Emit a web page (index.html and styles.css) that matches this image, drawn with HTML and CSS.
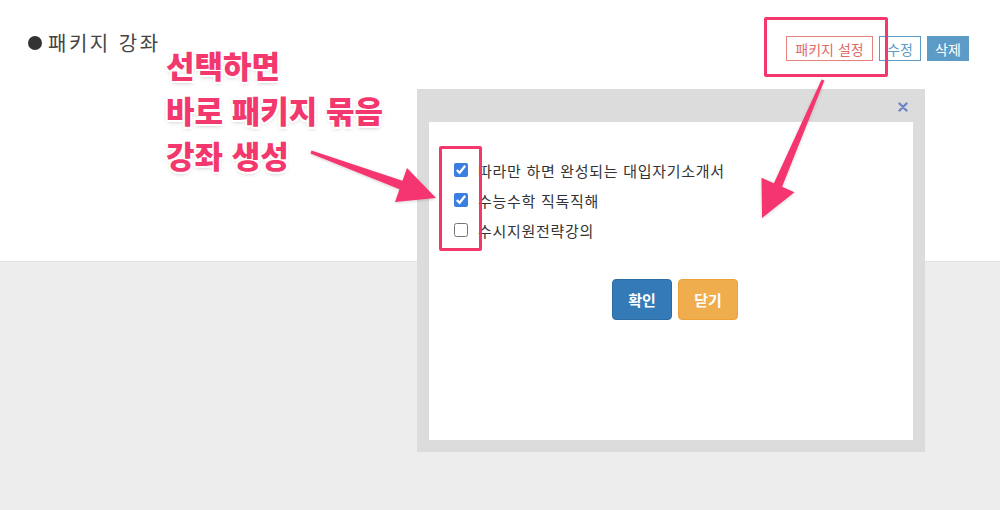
FILE: index.html
```html
<!DOCTYPE html>
<html lang="ko">
<head>
  <meta charset="UTF-8">
  <title>패키지 강좌</title>
  <link rel="stylesheet" href="styles.css">
</head>
<body>

  <div class="page">
    <header class="head">
      <h2 class="title"><span class="dot"></span>패키지 강좌</h2>
      <div class="actions">
        <button class="btn btn-line-red">패키지 설정</button>
        <button class="btn btn-line-blue">수정</button>
        <button class="btn btn-fill-blue">삭제</button>
      </div>
    </header>
    <main class="rest"></main>
  </div>

  <!-- package setting popup -->
  <div class="modal">
    <button class="close" aria-label="닫기">
      <svg width="10" height="10" viewBox="0 0 10 10">
        <path d="M1.5 1.5 L8.5 8.5 M8.5 1.5 L1.5 8.5" stroke="#6c86c4" stroke-width="2.4" stroke-linecap="round"/>
      </svg>
    </button>
    <div class="modal-body">
      <ul class="checks">
        <li><label><input type="checkbox" checked>따라만 하면 완성되는 대입자기소개서</label></li>
        <li><label><input type="checkbox" checked>수능수학 직독직해</label></li>
        <li><label><input type="checkbox">수시지원전략강의</label></li>
      </ul>
      <div class="modal-btns">
        <button class="mbtn mbtn-ok">확인</button>
        <button class="mbtn mbtn-close">닫기</button>
      </div>
    </div>
  </div>

  <!-- annotations -->
  <div class="note">선택하면<br>바로 패키지 묶음<br>강좌 생성</div>
  <div class="mark mark-top"></div>
  <div class="mark mark-checks"></div>

  <svg class="arrows" width="1000" height="510" viewBox="0 0 1000 510">
    <defs>
      <filter id="sh" x="-20%" y="-20%" width="140%" height="140%">
        <feDropShadow dx="0" dy="1" stdDeviation="1.5" flood-color="#000" flood-opacity="0.18"/>
      </filter>
    </defs>
    <polygon filter="url(#sh)" fill="#f5366f"
      points="311.5,150.6 402.5,180.8 407,168 436,198 395,202 399.5,189.2 310.5,153.4"/>
    <polygon filter="url(#sh)" fill="#f5366f"
      points="821.6,79.4 773.9,183.2 761.5,177.7 762,218 794.5,192.3 782.1,186.8 824.4,80.6"/>
  </svg>

</body>
</html>
```

FILE: styles.css
```css
:root {
  --text: #333;
  --blue: #5b9bc6;
  --red: #e06b67;
  --pink: #f2386d;
  --ko: "Noto Sans CJK KR", "Noto Sans", sans-serif;
}

body {
  margin: 0;
  font-family: var(--ko);
  color: var(--text);
  background: #ededed;
}

.page {
  display: flex;
  flex-direction: column;
  min-height: 510px;
}

.head {
  height: 262px;
  background: #fff;
  border-bottom: 1px solid #e2e2e2;
  box-sizing: border-box;
  display: flex;
  justify-content: space-between;
  align-items: flex-start;
  padding: 0 31px 0 28px;
}

.title {
  margin: 28px 0 0;
  display: flex;
  align-items: center;
  font-size: 20px;
  font-weight: 400;
  color: #444;
  letter-spacing: 2.5px;
}

.dot {
  width: 14px;
  height: 14px;
  border-radius: 50%;
  background: #333;
  margin-right: 6px;
}

.actions {
  margin-top: 36px;
  display: flex;
  gap: 6px;
}

.btn {
  height: 25px;
  padding: 0;
  font-family: var(--ko);
  font-size: 14px;
  background: #fff;
  border: 1px solid;
  cursor: pointer;
}

.btn-line-red {
  color: var(--red);
  border-color: #e8827e;
  width: 87px;
}

.btn-line-blue {
  color: var(--blue);
  border-color: var(--blue);
  width: 42px;
}

.btn-fill-blue {
  color: #fff;
  background: var(--blue);
  border-color: var(--blue);
  width: 42px;
}

.rest {
  flex: 1;
}

/* popup */
.modal {
  position: absolute;
  left: 417px;
  top: 89px;
  width: 508px;
  height: 363px;
  box-sizing: border-box;
  padding: 33px 12px 12px;
  background: #dcdcdc;
  display: flex;
}

.close {
  position: absolute;
  right: 17px;
  top: 13px;
  padding: 0;
  border: 0;
  background: none;
  line-height: 0;
  cursor: pointer;
}

.modal-body {
  flex: 1;
  background: #fff;
  padding: 33px 25px 0;
}

.checks {
  list-style: none;
  margin: 0;
  padding: 0;
}

.checks li {
  height: 30px;
  display: flex;
  align-items: center;
}

.checks label {
  display: flex;
  align-items: center;
  font-size: 15px;
  letter-spacing: 0.7px;
  color: #333;
}

.checks input {
  width: 14px;
  height: 14px;
  margin: 0 10px 0 0;
  accent-color: #3a7ee2;
}

.modal-btns {
  margin-top: 34px;
  display: flex;
  justify-content: center;
  gap: 6px;
  padding-left: 8px;
}

.mbtn {
  height: 41px;
  width: 60px;
  border: 1px solid;
  border-radius: 4px;
  color: #fff;
  font-family: var(--ko);
  font-size: 15px;
  font-weight: 700;
  cursor: pointer;
}

.mbtn-ok {
  background: #337ab7;
  border-color: #2e6da4;
}

.mbtn-close {
  background: #f0ad4e;
  border-color: #eea236;
}

/* annotations */
.note {
  position: absolute;
  left: 166px;
  top: 42px;
  font-size: 31px;
  font-weight: 900;
  line-height: 45px;
  color: var(--pink);
  text-shadow:
    -2px 0 #fff, 2px 0 #fff, 0 -2px #fff, 0 2px #fff,
    -1.5px -1.5px #fff, 1.5px 1.5px #fff, -1.5px 1.5px #fff, 1.5px -1.5px #fff,
    0 2px 4px rgba(0,0,0,0.25);
}

.mark {
  position: absolute;
  border: 3px solid var(--pink);
  border-radius: 2px;
  box-sizing: border-box;
}

.mark-top {
  left: 764px;
  top: 17px;
  width: 124px;
  height: 60px;
}

.mark-checks {
  left: 439px;
  top: 146px;
  width: 43px;
  height: 105px;
}

.arrows {
  position: absolute;
  left: 0;
  top: 0;
  pointer-events: none;
}
```
